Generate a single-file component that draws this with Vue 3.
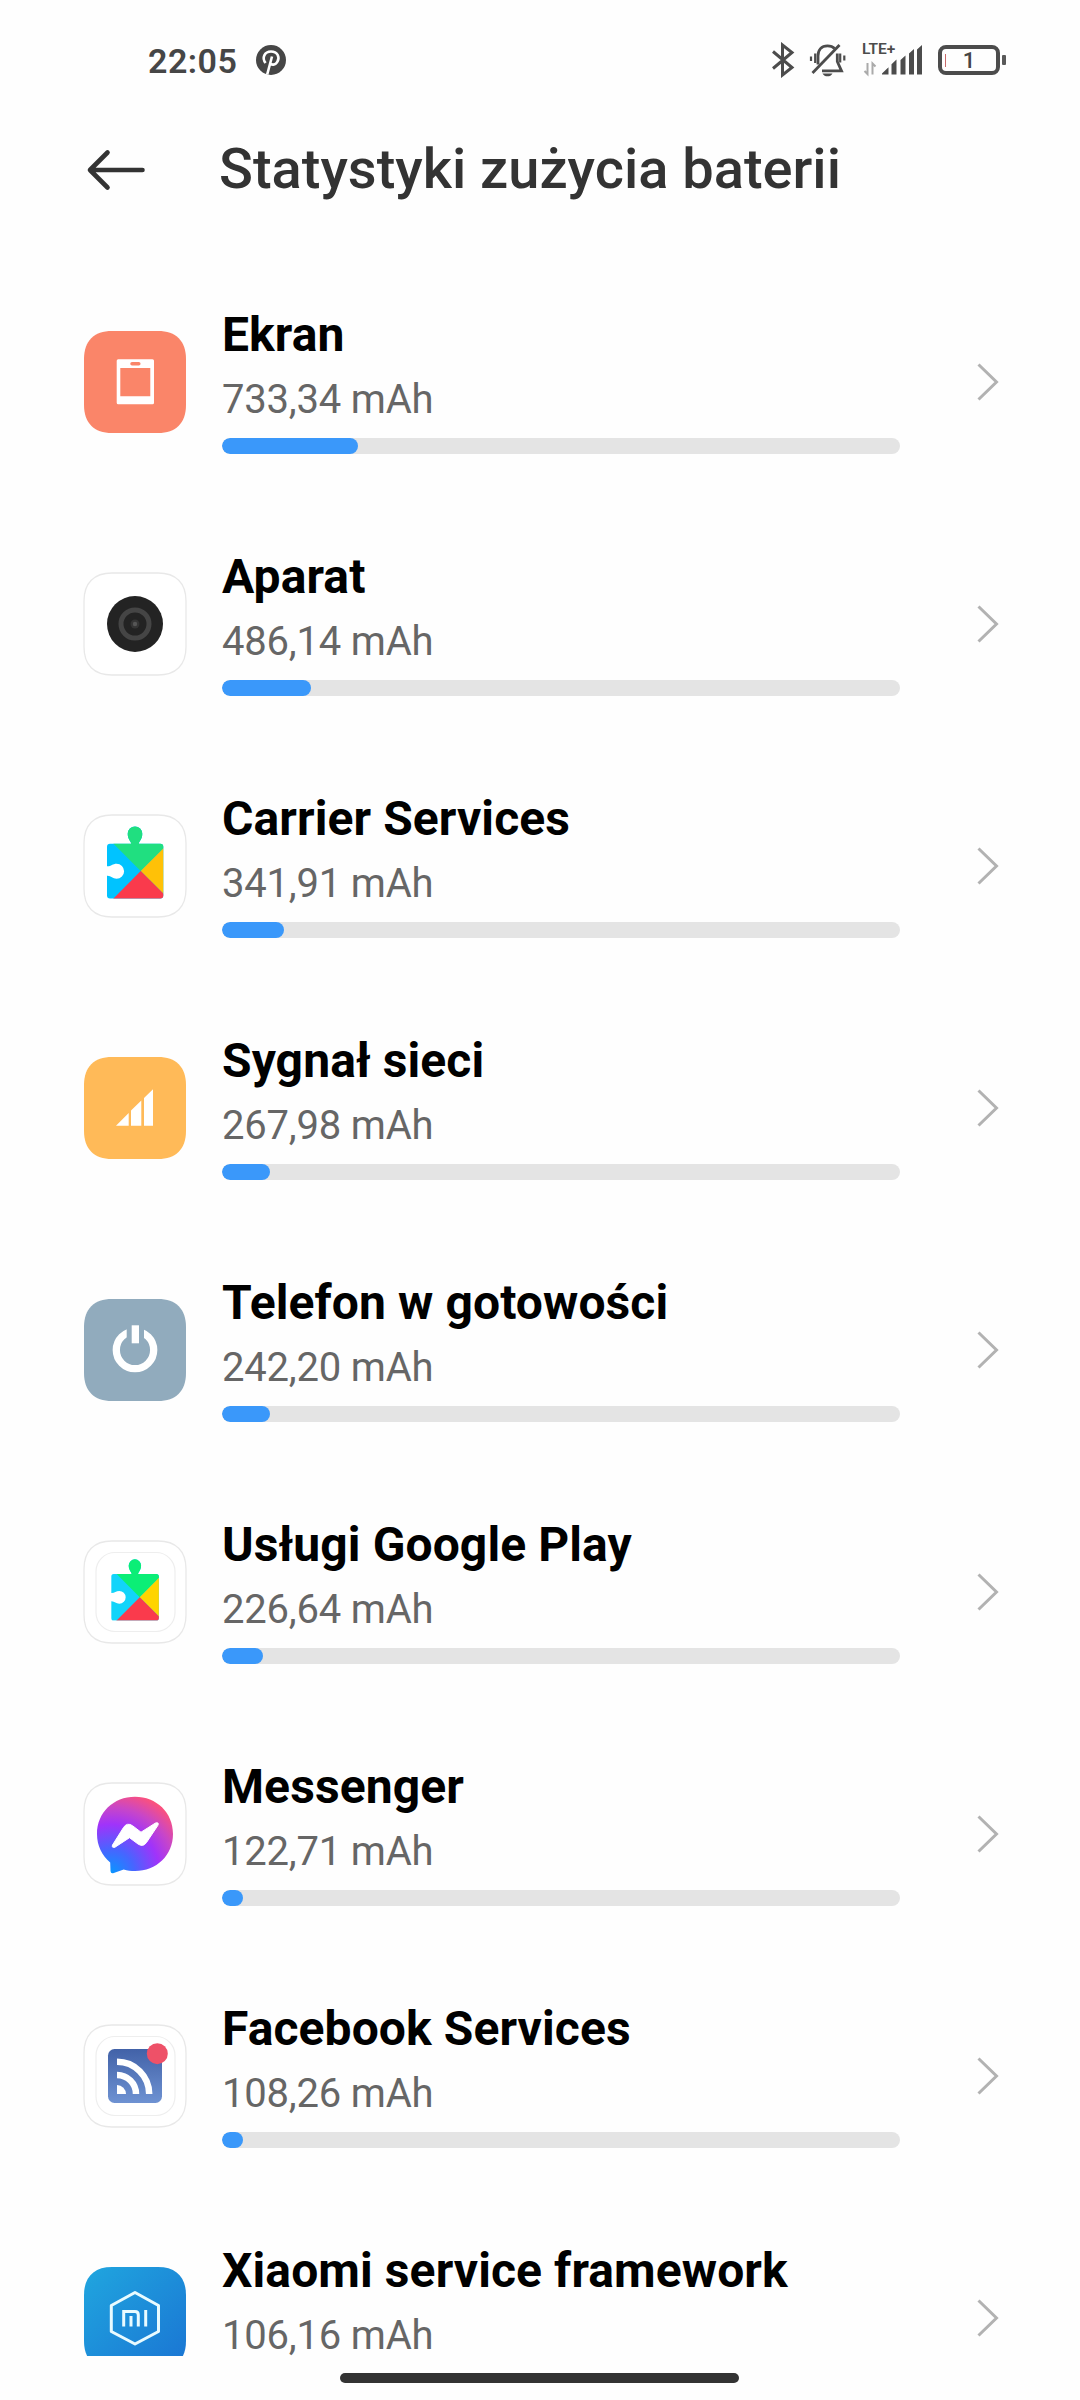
<script setup>
const rows = [
  { name: 'Ekran', value: '733,34 mAh', fill: 136, icon: 'screen', bg: '#fa8569' },
  { name: 'Aparat', value: '486,14 mAh', fill: 89, icon: 'camera' },
  { name: 'Carrier Services', value: '341,91 mAh', fill: 62, icon: 'puzzle' },
  { name: 'Sygnał sieci', value: '267,98 mAh', fill: 48, icon: 'signal', bg: '#ffba58' },
  { name: 'Telefon w gotowości', value: '242,20 mAh', fill: 48, icon: 'power', bg: '#91abbd' },
  { name: 'Usługi Google Play', value: '226,64 mAh', fill: 41, icon: 'puzzle', inset: true },
  { name: 'Messenger', value: '122,71 mAh', fill: 21, icon: 'messenger' },
  { name: 'Facebook Services', value: '108,26 mAh', fill: 21, icon: 'feed', inset: true },
  { name: 'Xiaomi service framework', value: '106,16 mAh', fill: 21, icon: 'mi', bg: 'url(#miGrad)' },
]
</script>

<template>
  <div class="screen">
    <div class="status">
      <span class="time">22:05</span>
      <svg class="pin" width="32" height="32" viewBox="0 0 32 32">
        <circle cx="16" cy="16" r="15" fill="#464646" />
        <path d="M10.6 19C6.500 14 9.500 7.500 16 7.500C22.500 7.500 25 13 22.500 17.500C20.500 21.500 16 21.500 15 18.500M17 12.500L12.200 30.500" fill="none" stroke="#fff" stroke-width="2.600" />
      </svg>
      <div class="spacer"></div>
      <svg class="bt" width="24" height="36" viewBox="0 0 24 36">
        <path d="M2 9.500L21 25.500L11.500 33V3L21 10.500L2 26.500" fill="none" stroke="#4c4c4c" stroke-width="3" stroke-linejoin="miter" />
      </svg>
      <svg class="bell" width="38" height="36" viewBox="0 0 38 36">
        <g fill="none" stroke="#4c4c4c" stroke-width="2.800">
          <path d="M9 22.500V14C9 8 12.500 3.800 18.500 3.800C21.500 3.800 24 4.800 25.600 6.500M28.300 11.500V19.500L32.500 28.800H13" />
          <path d="M30.500 3L3.500 31" />
          <path d="M6.200 11.500V21M2 14.500V19M31.200 11.500V20.500M35.300 13.500V18.500" stroke-width="2.200" />
        </g>
        <path d="M13.500 31.500H23.500C21.500 35.300 15.500 35.300 13.500 31.500Z" fill="#4c4c4c" />
      </svg>
      <div class="net">
        <span class="lte">LTE+</span>
        <svg width="62" height="36" viewBox="0 0 62 36">
          <path d="M5.500 21V32L2.500 29M10.500 32.500V21.500L13.500 24.500" fill="none" stroke="#aaa" stroke-width="2" />
          <path d="M20 32.500V31.500L26.500 25.200V32.500ZM29.500 32.500V22.300L34.500 17.500V32.500ZM38.500 32.500V18L43.500 13.500V32.500ZM47 32.500V11.500L52 7V32.500ZM55 32.500V7.500L60 3V32.500Z" fill="#4c4c4c" />
        </svg>
      </div>
      <div class="battery"><i></i><span>1</span><b></b></div>
    </div>

    <header class="header">
      <svg width="60" height="44" viewBox="0 0 60 44">
        <path d="M21.500 4.500L4 22L21.500 39.500M4 22H56.500" fill="none" stroke="#333" stroke-width="4.600" stroke-linecap="round" stroke-linejoin="round" />
      </svg>
      <h1>Statystyki zużycia baterii</h1>
    </header>

    <main class="list">
      <div v-for="row in rows" :key="row.name" class="row">
        <svg class="icon" width="104" height="104" viewBox="-1 -1 104 104">
          <defs>
            <linearGradient id="miGrad" x1="0" y1="0" x2="1" y2="1">
              <stop offset="0" stop-color="#20a6df" /><stop offset="1" stop-color="#1a74d3" />
            </linearGradient>
            <radialGradient id="msgGrad" gradientUnits="userSpaceOnUse" cx="27" cy="90" r="84">
              <stop offset="0" stop-color="#0896ff" /><stop offset=".28" stop-color="#4765ff" />
              <stop offset=".58" stop-color="#a033fa" /><stop offset=".78" stop-color="#c846c8" /><stop offset="1" stop-color="#ff5277" />
            </radialGradient>
            <linearGradient id="feedGrad" x1="0" y1="0" x2="0" y2="1">
              <stop offset="0" stop-color="#4262a8" /><stop offset="1" stop-color="#6e92d2" />
            </linearGradient>
            <clipPath id="puzzleShape">
              <path clip-rule="evenodd" d="M26 28.700H47.200C47 26.300 43.700 24.500 43.700 18.700A7.300 7.300 0 0 1 58.300 18.700C58.300 24.500 55 26.300 54.800 28.700H76.300A3 3 0 0 1 79.300 31.700V80.500A3 3 0 0 1 76.300 83.500H26A3 3 0 0 1 23 80.500V60.800C27 60.500 28.500 63.700 32.600 63.700A7.500 7.500 0 0 0 32.600 48.700C28.500 48.700 27 51.500 23 51.200V31.700A3 3 0 0 1 26 28.700Z" />
            </clipPath>
          </defs>
          <path
            d="M28 0H74C92 0 102 10 102 28V74C102 92 92 102 74 102H28C10 102 0 92 0 74V28C0 10 10 0 28 0Z"
            :fill="row.bg || '#fff'" :stroke="row.bg ? 'none' : '#e8e8e8'" stroke-width="1.300" />
          <rect v-if="row.inset" x="12" y="11.500" width="79" height="79" rx="19" fill="#fff" stroke="#eee" stroke-width="1.200" />

          <template v-if="row.icon === 'screen'">
            <path fill="#fff" fill-rule="evenodd" d="M34.200 28.300H68.500Q70 28.300 70 29.800V71.800Q70 73.300 68.500 73.300H34.200Q32.700 73.300 32.700 71.800V29.800Q32.700 28.300 34.200 28.300ZM36.300 37V65.300H66.300V37ZM48 31A1.700 1.700 0 0 0 48 34.500H54.800A1.700 1.700 0 0 0 54.800 31Z" />
          </template>
          <template v-else-if="row.icon === 'camera'">
            <circle cx="51" cy="51" r="28" fill="#232323" />
            <circle cx="51" cy="51" r="14" fill="none" stroke="#454545" stroke-width="5" />
            <circle cx="51" cy="51" r="4.500" fill="#353535" />
            <circle cx="51" cy="51" r="2.200" fill="#565656" />
          </template>
          <g v-else-if="row.icon === 'puzzle'" :transform="row.inset ? 'translate(7.7 8.700) scale(.847)' : undefined">
            <g clip-path="url(#puzzleShape)">
              <rect x="20" y="8" width="62" height="78" :fill="row.inset ? '#12d4fa' : '#00c3ff'" />
              <path d="M29.500 28.700V8H84V28.700L56.700 56Z" :fill="row.inset ? '#0bee76' : '#20df80'" />
              <path d="M84 28.700L56.700 56L84 83.300Z" :fill="row.inset ? '#ffd400' : '#ffc107'" />
              <path d="M56.700 56L27 86H86.700Z" fill="#fa3a4c" />
            </g>
          </g>
          <template v-else-if="row.icon === 'signal'">
            <path fill="#fff" d="M32 68.700L44.700 56V68.700ZM47 68.700V53.500L57.300 43.500V68.700ZM60 68.700V41L69 32.300V68.700Z" />
          </template>
          <template v-else-if="row.icon === 'power'">
            <circle cx="51" cy="51" r="18.700" fill="none" stroke="#fff" stroke-width="7.300" />
            <rect x="42.700" y="25" width="17.300" height="18" fill="#91abbd" />
            <rect x="47.700" y="26.300" width="7.300" height="18" fill="#fff" />
          </template>
          <template v-else-if="row.icon === 'messenger'">
            <path fill="url(#msgGrad)" d="M51 13.700C72.500 13.700 89 29.500 89 51C89 72.300 72.500 88 51 88C47 88 43.300 87.500 39.700 86.500L29.800 90Q26.700 91 26.500 88L26.200 79.500C18 72.500 13 62.800 13 51C13 29.500 29.500 13.700 51 13.700Z" />
            <path fill="#fff" stroke="#fff" stroke-width="1" stroke-linejoin="round" d="M28.500 62L39.500 44.500Q43 39 48.500 42.700L57 49.200L71.500 40Q75.500 39 73.800 42.500L62.500 59.500Q59 64.500 54 61L45.500 54.700L31 64.200Q27.500 65.200 28.500 62Z" />
          </template>
          <template v-else-if="row.icon === 'feed'">
            <rect x="24" y="24" width="54" height="54" rx="6.500" fill="url(#feedGrad)" />
            <path d="M33 36.800A32.200 32.200 0 0 1 65.200 69M33 50A19 19 0 0 1 52 69" fill="none" stroke="#fff" stroke-width="6.500" />
            <path d="M33 60A9 9 0 0 1 42 69H33Z" fill="#fff" />
            <circle cx="73.300" cy="28.700" r="10.500" fill="#ee5168" />
          </template>
          <g v-else fill="none" stroke="#e9fbff">
            <path d="M51 25.500L74.500 38.500V64.500L51 77L27.300 64.500V38.500Z" stroke-width="3" stroke-linejoin="round" />
            <path d="M39.700 59.500V44.500H51Q54.300 44.500 54.300 48V59.500M47 49V59.500M61.700 43V59.500" stroke-width="3" />
          </g>
        </svg>
        <div class="info">
          <div class="name">{{ row.name }}</div>
          <div class="value">{{ row.value }}</div>
          <div class="track"><div class="fill" :style="{ width: row.fill + 'px' }"></div></div>
        </div>
        <svg class="chevron" width="24" height="40" viewBox="0 0 24 40">
          <path d="M2.500 2.500L20.500 20L2.500 37.500" fill="none" stroke="#b2b2b2" stroke-width="3" />
        </svg>
      </div>
    </main>
    <footer class="nav"><div class="handle"></div></footer>
  </div>
</template>

<style>
body { margin: 0; background: #fff; }
</style>

<style scoped>
.screen {
  width: 1080px;
  height: 2400px;
  display: flex;
  flex-direction: column;
  overflow: hidden;
  background: #fefefe;
  font-family: Roboto, "Noto Sans", sans-serif;
}
.status {
  flex: none;
  box-sizing: border-box;
  height: 120px;
  padding: 0 80px 0 148px;
  display: flex;
  align-items: center;
  color: #464646;
}
.time { font-size: 34px; font-weight: 600; line-height: 40px; letter-spacing: .5px; margin-top: 2px; width: 107px; white-space: nowrap; }
.spacer { flex: 1; }
.bt { margin-right: 14px; }
.bell { margin-right: 15px; }
.net { position: relative; width: 62px; height: 36px; margin-right: 14px; }
.net svg { display: block; }
.lte { position: absolute; left: 0; top: -2px; font-size: 15.500px; line-height: 18px; font-weight: 600; color: #4c4c4c; white-space: nowrap; }
.battery {
  position: relative;
  box-sizing: border-box;
  width: 62px;
  height: 30px;
  border: 4px solid #4c4c4c;
  border-radius: 8px;
  text-align: center;
  font-size: 22px;
  font-weight: 500;
  line-height: 24px;
}
.battery i { position: absolute; left: 3px; top: 5px; width: 1px; height: 13px; background: #c96a6a; }
.battery b { position: absolute; left: 60px; top: 6px; width: 4px; height: 10px; border-radius: 1px; background: #5a5a5a; }
.header { flex: none; height: 141px; display: flex; align-items: flex-start; padding-left: 86px; }
.header svg { margin-top: 28px; }
h1 { margin: 14px 0 0 73px; font-size: 56px; line-height: 70px; font-weight: 500; color: #333; white-space: nowrap; }
.list { flex: none; height: 2095px; overflow: hidden; }
.row { height: 242px; display: flex; align-items: center; padding-left: 83px; }
.icon { flex: none; overflow: visible; }
.info { width: 678px; margin-left: 35px; height: 154px; }
.name { font-size: 48px; line-height: 60px; height: 75px; font-weight: 700; letter-spacing: .1px; color: #000; white-space: nowrap; }
.value { font-size: 40px; line-height: 40px; height: 58px; font-weight: 370; letter-spacing: -.2px; color: #666; white-space: nowrap; }
.track { height: 16px; border-radius: 8px; background: #e4e4e4; overflow: hidden; }
.fill { height: 16px; border-radius: 8px; background: #3a98fa; }
.chevron { margin-left: 76px; }
.nav { flex: 1; display: flex; justify-content: center; padding: 17px 2px 0 0; }
.handle { width: 399px; height: 10px; border-radius: 5px; background: #333; }
</style>
